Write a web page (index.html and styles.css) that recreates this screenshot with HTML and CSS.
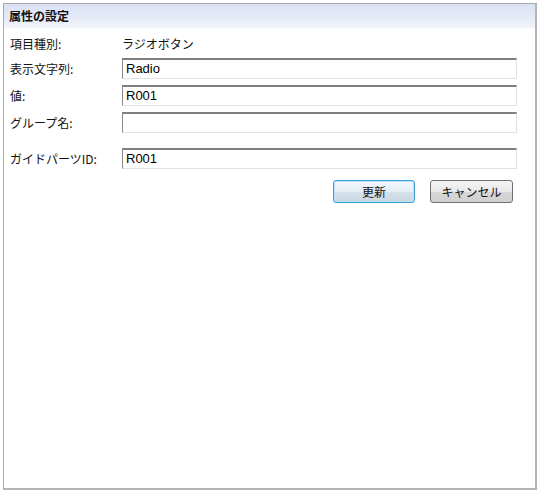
FILE: index.html
```html
<!DOCTYPE html>
<html lang="ja">
<head>
<meta charset="utf-8">
<link rel="stylesheet" href="styles.css">
</head>
<body>
<div class="panel">
  <div class="header">属性の設定</div>
  <div class="content">
    <div class="form">
      <div class="label">項目種別:</div>
      <div class="value">ラジオボタン</div>
      <div class="label">表示文字列:</div>
      <div class="field">Radio</div>
      <div class="label">値:</div>
      <div class="field">R001</div>
      <div class="label">グループ名:</div>
      <div class="field"></div>
      <div class="label spaced">ガイドパーツID:</div>
      <div class="field spaced">R001</div>
    </div>
    <div class="buttons">
      <button class="btn primary">更新</button>
      <button class="btn">キャンセル</button>
    </div>
  </div>
</div>
</body>
</html>
```
FILE: styles.css
```css
html, body {
  margin: 0;
  padding: 0;
  background: #ffffff;
}
body {
  font-family: "Noto Sans CJK JP", "DejaVu Sans", sans-serif;
  font-size: 12px;
  color: #111;
}
.panel {
  margin: 3px 0 0 3px;
  width: 531px;
  height: 484px;
  border-top: 1px solid #a9a9a9;
  border-left: 1px solid #a9a9a9;
  border-right: 2px solid #b4b4b4;
  border-bottom: 2px solid #b4b4b4;
  display: flex;
  flex-direction: column;
}
.header {
  height: 24px;
  line-height: 24px;
  padding-left: 5px;
  font-weight: bold;
  font-size: 12px;
  color: #111;
  background: linear-gradient(to bottom, #d9e1f4 0%, #e4e9f7 50%, #f3f5fb 100%);
}
.content {
  padding: 8px 0 0 6px;
}
.form {
  display: grid;
  grid-template-columns: 112px 395px;
  row-gap: 6px;
  align-items: center;
}
.label,
.value {
  font-size: 12px;
  line-height: 16px;
  color: #111;
}
.field {
  height: 21px;
  box-sizing: border-box;
  border-top: 2px solid #7f7f7f;
  border-left: 1px solid #8a8a8a;
  border-right: 1px solid #e2e2e2;
  border-bottom: 1px solid #e2e2e2;
  font-family: "Liberation Sans", Arial, sans-serif;
  font-size: 13px;
  line-height: 17px;
  padding-left: 3px;
  color: #000;
}
.spaced {
  margin-top: 9px;
}
.buttons {
  display: flex;
  justify-content: flex-end;
  gap: 15px;
  width: 503px;
  margin-top: 11px;
}
.btn {
  width: 83px;
  height: 23px;
  box-sizing: border-box;
  border: 1px solid #707070;
  border-radius: 3px;
  background: linear-gradient(to bottom, #f4f4f4 0%, #e8e8e8 50%, #d8d8d8 51%, #d0d0d0 100%);
  font-family: "Noto Sans CJK JP", sans-serif;
  font-size: 12px;
  color: #111;
  padding: 0;
}
.btn.primary {
  width: 82px;
  border: 1px solid #3c9fd6;
  box-shadow: inset 0 0 0 1px #b9e1f7;
  background: linear-gradient(to bottom, #f2f7fb 0%, #e5eef4 50%, #d4e2eb 51%, #cbd8e1 100%);
}
```
